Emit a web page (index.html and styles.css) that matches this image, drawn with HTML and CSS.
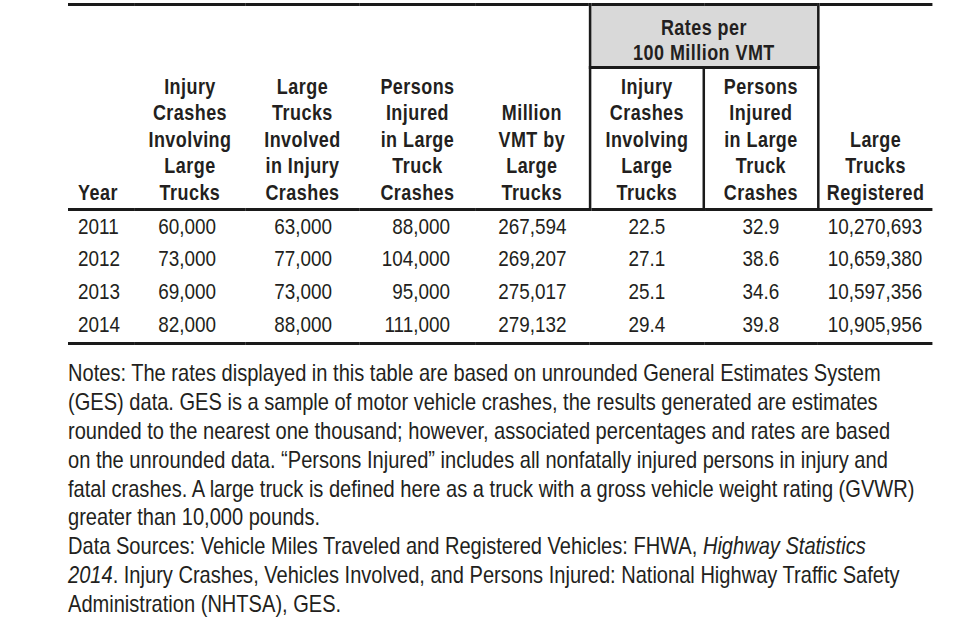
FILE: index.html
```html
<!DOCTYPE html>
<html>
<head>
<meta charset="utf-8">
<link rel="stylesheet" href="styles.css">
</head>
<body>
<div class="page">
  <div class="narrow">
    <table class="stats">
      <colgroup>
        <col class="c-year">
        <col class="c2">
        <col class="c3">
        <col class="c4">
        <col class="c5">
        <col class="c6">
        <col class="c7">
        <col class="c8">
      </colgroup>
      <thead>
        <tr>
          <th rowspan="2" class="h-year">Year</th>
          <th rowspan="2">Injury<br>Crashes<br>Involving<br>Large<br>Trucks</th>
          <th rowspan="2">Large<br>Trucks<br>Involved<br>in Injury<br>Crashes</th>
          <th rowspan="2">Persons<br>Injured<br>in Large<br>Truck<br>Crashes</th>
          <th rowspan="2">Million<br>VMT by<br>Large<br>Trucks</th>
          <th colspan="2" class="group">Rates per<br>100 Million VMT</th>
          <th rowspan="2" class="boxed-right">Large<br>Trucks<br>Registered</th>
        </tr>
        <tr>
          <th class="boxed">Injury<br>Crashes<br>Involving<br>Large<br>Trucks</th>
          <th class="boxed">Persons<br>Injured<br>in Large<br>Truck<br>Crashes</th>
        </tr>
      </thead>
      <tbody>
        <tr><td class="year">2011</td><td class="r2">60,000</td><td class="r3">63,000</td><td class="r4">88,000</td><td class="ctr">267,594</td><td class="ctr">22.5</td><td class="ctr">32.9</td><td class="ctr">10,270,693</td></tr>
        <tr><td class="year">2012</td><td class="r2">73,000</td><td class="r3">77,000</td><td class="r4">104,000</td><td class="ctr">269,207</td><td class="ctr">27.1</td><td class="ctr">38.6</td><td class="ctr">10,659,380</td></tr>
        <tr><td class="year">2013</td><td class="r2">69,000</td><td class="r3">73,000</td><td class="r4">95,000</td><td class="ctr">275,017</td><td class="ctr">25.1</td><td class="ctr">34.6</td><td class="ctr">10,597,356</td></tr>
        <tr class="last"><td class="year">2014</td><td class="r2">82,000</td><td class="r3">88,000</td><td class="r4">111,000</td><td class="ctr">279,132</td><td class="ctr">29.4</td><td class="ctr">39.8</td><td class="ctr">10,905,956</td></tr>
      </tbody>
    </table>
    <div class="notes">
      <p>Notes: The rates displayed in this table are based on unrounded General Estimates System<br>(GES) data. GES is a sample of motor vehicle crashes, the results generated are estimates<br>rounded to the nearest one thousand; however, associated percentages and rates are based<br>on the unrounded data. “Persons Injured” includes all nonfatally injured persons in injury and<br>fatal crashes. A large truck is defined here as a truck with a gross vehicle weight rating (GVWR)<br>greater than 10,000 pounds.</p>
      <p>Data Sources: Vehicle Miles Traveled and Registered Vehicles: FHWA, <i>Highway Statistics<br>2014</i>. Injury Crashes, Vehicles Involved, and Persons Injured: National Highway Traffic Safety<br>Administration (NHTSA), GES.</p>
    </div>
  </div>
</div>
</body>
</html>
```

FILE: styles.css
```css
html, body {
  margin: 0;
  padding: 0;
  background: #ffffff;
}

body {
  font-family: "Liberation Sans", Arial, sans-serif;
  color: #231f20;
}

.page {
  padding: 3px 0 0 68px;
}

/* Arial Narrow look: horizontally condense Liberation Sans (Arial metrics) */
.narrow {
  width: 1033.5px;
  transform: scaleX(0.836);
  transform-origin: 0 0;
}

.stats {
  width: 1033.5px;
  border-collapse: collapse;
  table-layout: fixed;
  border-top: 3px solid #1a1a1a;
  border-bottom: 3px solid #1a1a1a;
}

.c-year { width: 80.14px; }
.c2 { width: 131.58px; }
.c3 { width: 137.56px; }
.c4 { width: 137.56px; }
.c5 { width: 137.56px; }
.c6 { width: 136.36px; }
.c7 { width: 136.36px; }
.c8 { width: 136.36px; }

.stats th {
  font-weight: bold;
  font-size: 21.5px;
  letter-spacing: 0.55px;
  line-height: 26.5px;
  text-align: center;
  vertical-align: bottom;
  padding: 0 0 1.5px 0;
  border-bottom: 3px solid #1a1a1a;
}

.stats th.h-year {
  text-align: left;
  padding-left: 12px;
}

.stats th.group {
  background: #d9d9d9;
  border: 3.6px solid #1a1a1a;
  border-top: none;
  border-bottom-width: 3px;
  vertical-align: top;
  height: 50px;
  padding: 10px 0 0 0;
  line-height: 24.5px;
}

.stats th.boxed {
  border-left: 3.6px solid #1a1a1a;
  border-right: 3.6px solid #1a1a1a;
  padding-top: 4.5px;
}

.stats th.boxed-right {
  border-left: 3.6px solid #1a1a1a;
}

.stats td {
  font-size: 22.6px;
  line-height: 32.7px;
  padding: 0;
  white-space: nowrap;
}

.stats tr.last td {
  padding-bottom: 1px;
}

.stats td.year {
  padding-left: 12px;
}

.stats td.r2 {
  text-align: right;
  padding-right: 34.7px;
}

.stats td.r3 {
  text-align: right;
  padding-right: 33.5px;
}

.stats td.r4 {
  text-align: right;
  padding-right: 29.9px;
}

.stats td.ctr {
  text-align: center;
}

.notes {
  margin-top: 14px;
  font-size: 24px;
  line-height: 28.8px;
  white-space: nowrap;
}

.notes p {
  margin: 0;
}
```
